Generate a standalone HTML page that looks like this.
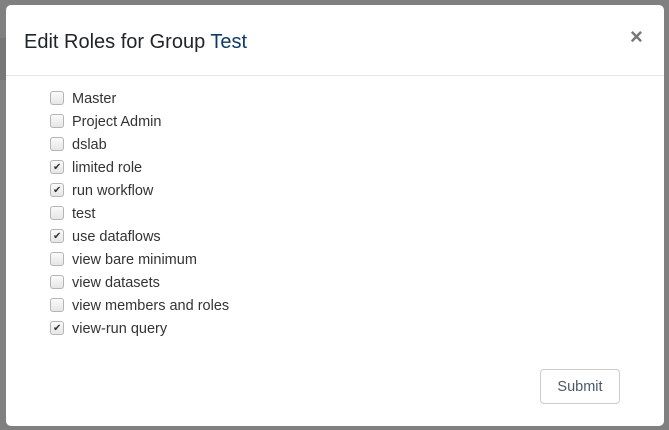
<!DOCTYPE html>
<html><head><style>
html,body{margin:0;padding:0;width:669px;height:430px;overflow:hidden;background:#808080;font-family:"Liberation Sans",sans-serif;}
.strip{position:absolute;left:0;top:38px;width:6px;height:42px;background:#777;}
.modal{position:absolute;left:6px;top:5px;width:658px;height:421px;background:#fff;border-radius:5px;}
.title{position:absolute;left:18px;top:26px;font-size:20px;color:#212529;}
.title span{color:#0d3b66;}
.close{position:absolute;left:624px;top:19px;font-size:22px;font-weight:bold;color:#777;}
.hr{position:absolute;left:0;right:0;top:70px;border-top:1px solid #e5e5e5;}
.item{position:absolute;left:44px;font-size:14.5px;color:#333;height:23px;line-height:23px;}
.cb{position:absolute;left:0;top:4px;width:12px;height:12px;border:1px solid #b5b5b5;border-radius:3px;background:linear-gradient(#fafafa,#e6e6e6);}
.cb.c::after{content:"✔";position:absolute;left:2px;top:-5px;font-size:10px;color:#333;}
.lbl{position:absolute;left:22px;top:1px;white-space:nowrap;}
.btn{position:absolute;left:534px;top:364px;width:78px;height:33px;border:1px solid #ccc;border-radius:4px;font-size:14.5px;color:#4a5a6a;text-align:center;line-height:35px;}
</style></head><body>
<div class="strip"></div>
<div class="modal">
<div class="title">Edit Roles for Group <span>Test</span></div>
<div class="close">×</div>
<div class="hr"></div>
<div class="item" style="top:82px"><div class="cb"></div><div class="lbl">Master</div></div>
<div class="item" style="top:105px"><div class="cb"></div><div class="lbl">Project Admin</div></div>
<div class="item" style="top:128px"><div class="cb"></div><div class="lbl">dslab</div></div>
<div class="item" style="top:151px"><div class="cb c"></div><div class="lbl">limited role</div></div>
<div class="item" style="top:174px"><div class="cb c"></div><div class="lbl">run workflow</div></div>
<div class="item" style="top:197px"><div class="cb"></div><div class="lbl">test</div></div>
<div class="item" style="top:220px"><div class="cb c"></div><div class="lbl">use dataflows</div></div>
<div class="item" style="top:243px"><div class="cb"></div><div class="lbl">view bare minimum</div></div>
<div class="item" style="top:266px"><div class="cb"></div><div class="lbl">view datasets</div></div>
<div class="item" style="top:289px"><div class="cb"></div><div class="lbl">view members and roles</div></div>
<div class="item" style="top:312px"><div class="cb c"></div><div class="lbl">view-run query</div></div>
<div class="btn">Submit</div>
</div>
</body></html>
